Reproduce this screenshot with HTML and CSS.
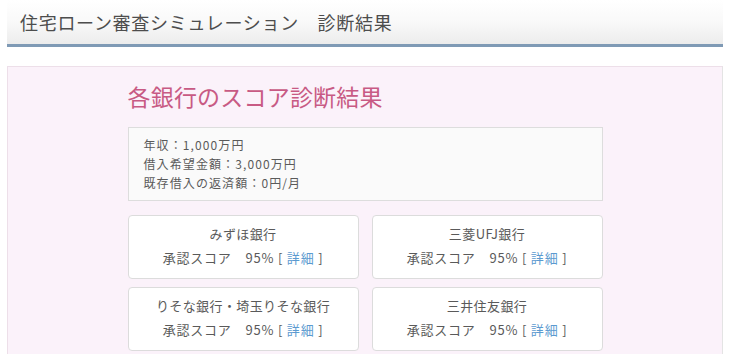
FILE: index.html
```html
<!DOCTYPE html>
<html lang="ja">
<head>
<meta charset="utf-8">
<link rel="stylesheet" href="styles.css">
</head>
<body>
<header class="page-header">
  <h1 class="page-title">住宅ローン審査シミュレーション　診断結果</h1>
</header>
<main class="panel">
  <div class="content">
    <h2 class="result-title">各銀行のスコア診断結果</h2>
    <div class="summary">
      <p>年収：1,000万円</p>
      <p>借入希望金額：3,000万円</p>
      <p>既存借入の返済額：0円/月</p>
    </div>
    <div class="cards">
      <div class="card">
        <p class="bank">みずほ銀行</p>
        <p class="score">承認スコア　95% [&nbsp;<a href="#" class="detail">詳細</a>&nbsp;]</p>
      </div>
      <div class="card">
        <p class="bank">三菱UFJ銀行</p>
        <p class="score">承認スコア　95% [&nbsp;<a href="#" class="detail">詳細</a>&nbsp;]</p>
      </div>
      <div class="card">
        <p class="bank">りそな銀行・埼玉りそな銀行</p>
        <p class="score">承認スコア　95% [&nbsp;<a href="#" class="detail">詳細</a>&nbsp;]</p>
      </div>
      <div class="card">
        <p class="bank">三井住友銀行</p>
        <p class="score">承認スコア　95% [&nbsp;<a href="#" class="detail">詳細</a>&nbsp;]</p>
      </div>
    </div>
  </div>
</main>
</body>
</html>
```
FILE: styles.css
```css
html, body {
  margin: 0;
  padding: 0;
  background: #ffffff;
}
body {
  padding: 0 7px;
  font-family: "Noto Sans CJK JP", "Noto Sans", sans-serif;
  color: #5a5a5a;
  overflow: hidden;
  height: 354px;
  box-sizing: border-box;
}
p { margin: 0; }
.page-header {
  height: 44px;
  background: linear-gradient(to bottom, #ffffff 0%, #f9f9f9 50%, #ececec 100%);
  border-bottom: 3px solid #7f9ab5;
  display: flex;
  align-items: center;
  padding-left: 13px;
}
.page-title {
  margin: 0;
  font-size: 18px;
  font-weight: normal;
  color: #4d4d4d;
  letter-spacing: 0.7px;
}
.panel {
  display: block;
  margin-top: 19px;
  background: #fbf2fa;
  border: 1px solid #eddfe9;
  border-right-color: #e4e4e4;
  border-bottom: none;
  height: 288px;
  box-sizing: border-box;
  overflow: hidden;
}
.content {
  width: 475px;
  margin: 0 auto;
  padding-top: 14px;
}
.result-title {
  margin: 0 0 16px;
  font-size: 23px;
  line-height: 30px;
  font-weight: normal;
  color: #c85a84;
  letter-spacing: 0.2px;
}
.summary {
  background: #fafafa;
  border: 1px solid #dddddd;
  padding: 7px 15px 8px;
  font-size: 12px;
  line-height: 19px;
  color: #5a5a5a;
  letter-spacing: 1.1px;
}
.cards {
  margin-top: 14px;
  display: grid;
  grid-template-columns: 231px 231px;
  column-gap: 13px;
  row-gap: 8px;
}
.card {
  background: #ffffff;
  border: 1px solid #dcdcdc;
  border-radius: 4px;
  height: 56px;
  padding-top: 6px;
  text-align: center;
  font-size: 13px;
  line-height: 24px;
  color: #5a5a5a;
}
.bank { letter-spacing: 0.4px; }
.score { letter-spacing: 0.8px; }
.detail {
  color: #5b9ad0;
  text-decoration: none;
}
```
